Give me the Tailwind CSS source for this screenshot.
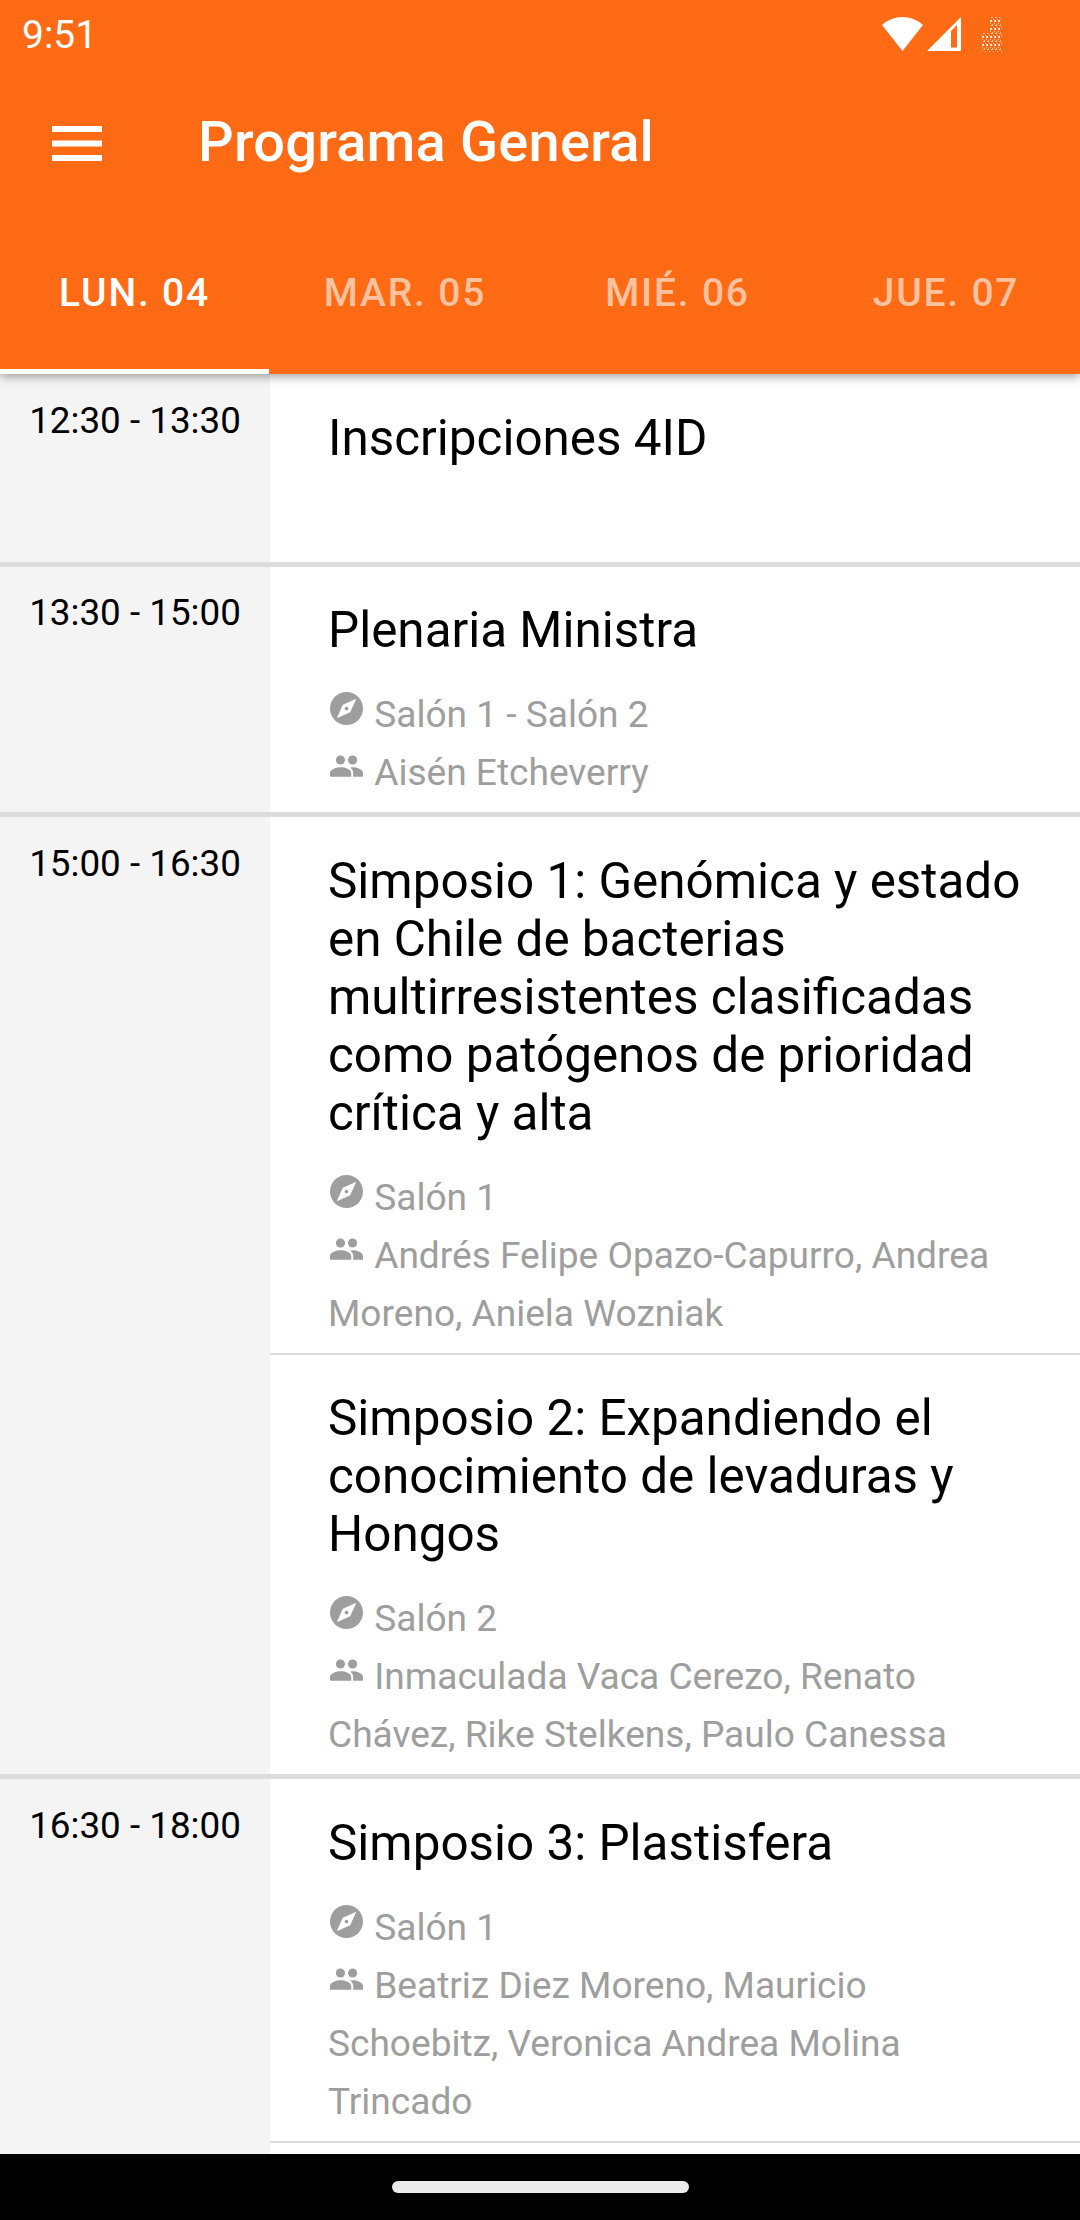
<!DOCTYPE html>
<html lang="es">
<head>
    <meta charset="UTF-8">
    <meta name="viewport" content="width=device-width, initial-scale=1.0">
    <title>Programa General</title>
    <script src="https://cdn.jsdelivr.net/npm/@tailwindcss/browser@4"></script>
</head>
<body class="bg-white font-['Roboto',sans-serif] text-black">
    <!-- icons -->
    <svg class="hidden">
        <symbol id="compass" viewBox="0 0 98 98">
            <path fill-rule="evenodd" fill="currentColor" d="M49 0a49 49 0 1 0 0 98a49 49 0 1 0 0-98zM78 20L60 60L20 78L38 38z"/>
            <circle cx="49" cy="49" r="5.5" fill="currentColor"/>
        </symbol>
        <symbol id="people" viewBox="0 0 98 64">
            <circle cx="31" cy="14" r="13.5" fill="currentColor"/>
            <circle cx="67" cy="14" r="13.5" fill="currentColor"/>
            <path fill="currentColor" d="M0 64V53C0 42 21 36 32 36S63 42 63 53V64zM69 64V53C69 46 66 41 60 36.500Q64 36 67 36C78 36 98 42 98 53V64z"/>
        </symbol>
    </svg>

    <div class="flex h-[2220px] w-[1080px] flex-col overflow-hidden">
        <header class="relative z-10 h-[374px] shrink-0 bg-[#ff6a15] text-white shadow-[0_3px_9px_rgba(0,0,0,0.35)]">
            <div class="flex h-[68px] items-center justify-between pl-[22px] pr-[77px]">
                <span class="text-[39px] leading-[68px] pt-px">9:51</span>
                <div class="flex items-start">
                    <svg class="h-[35px] w-[41px]" viewBox="0 0 41 35" fill="#fff"><path d="M0 8Q9 0 20.500 0T41 8L20.500 34z"/></svg>
                    <svg class="ml-[4px] h-[35px] w-[34px]" viewBox="0 0 34 35"><path fill="#fff" fill-rule="evenodd" d="M34 0V34H0zM30 8L24 14V30.500H30z"/></svg>
                    <svg class="ml-[20px] h-[35px] w-[22px]" viewBox="0 0 22 35">
                        <defs>
                            <pattern id="dots" width="4" height="8" patternUnits="userSpaceOnUse">
                                <path fill="#fff" fill-opacity=".85" d="M1 3h2v2H1z"/>
                                <path fill="#fff" fill-opacity=".6" d="M2 0h2v1H2zM0 2h1v1H0zM1 6h1v1H1zM3 7h1v1H3z"/>
                            </pattern>
                        </defs>
                        <path fill="url(#dots)" d="M9 0H21V35H0V16H9z"/>
                    </svg>
                </div>
            </div>
            <div class="flex h-[150px] items-center pl-[52px]">
                <svg class="h-[35px] w-[50px]" viewBox="0 0 50 35" fill="#fff"><path d="M0 0h50v6H0zM0 14.500h50v6H0zM0 29h50v6H0z"/></svg>
                <h1 class="ml-[96px] pb-[2px] text-[56px] font-medium leading-[66px] tracking-[0.2px]">Programa General</h1>
            </div>
            <nav class="grid h-[156px] grid-cols-4 text-center text-[39px] font-medium leading-[150px] tracking-[1.8px] text-white/60">
                <div class="mr-px border-b-[5px] border-white text-white">LUN. 04</div>
                <div>MAR. 05</div>
                <div class="pl-[5px]">MIÉ. 06</div>
                <div class="pl-[2px]">JUE. 07</div>
            </nav>
        </header>

        <main class="h-[1780px] shrink-0 overflow-hidden">
            <section class="flex h-[193px] border-b-[5px] border-[#dcdcdc]">
                <div class="w-[270px] shrink-0 bg-[#f4f4f4] pt-[25px] text-center text-[36.8px] leading-[43px]">12:30 - 13:30</div>
                <div class="grow px-[58px] pt-[35px]">
                    <h2 class="text-[49.4px] leading-[58px]">Inscripciones 4ID</h2>
                </div>
            </section>

            <section class="flex h-[250px] border-b-[5px] border-[#dcdcdc]">
                <div class="w-[270px] shrink-0 bg-[#f4f4f4] pt-[24px] text-center text-[36.8px] leading-[43px]">13:30 - 15:00</div>
                <div class="grow px-[58px] pt-[34px]">
                    <h2 class="text-[49.4px] leading-[58px]">Plenaria Ministra</h2>
                    <div class="mt-[27px] text-[37.1px] leading-[58px] text-[#9e9e9e]">
                        <p><svg class="ml-[2px] mr-[2px] inline h-[33px] w-[33px] align-[2px]"><use href="#compass"/></svg> Salón 1 - Salón 2</p>
                        <p><svg class="ml-[2px] mr-[2px] inline h-[22px] w-[33px] align-[8px]"><use href="#people"/></svg> Aisén Etcheverry</p>
                    </div>
                </div>
            </section>

            <section class="flex h-[962px] border-b-[5px] border-[#dcdcdc]">
                <div class="w-[270px] shrink-0 bg-[#f4f4f4] pt-[25px] text-center text-[36.8px] leading-[43px]">15:00 - 16:30</div>
                <div class="grow">
                    <div class="h-[538px] border-b-2 border-[#dcdcdc] px-[58px] pt-[35px]">
                        <h2 class="whitespace-nowrap text-[49.4px] leading-[58px]">Simposio 1: Genómica y estado<br>en Chile de bacterias<br>multirresistentes clasificadas<br>como patógenos de prioridad<br>crítica y alta</h2>
                        <div class="mt-[27px] whitespace-nowrap text-[37.1px] leading-[58px] text-[#9e9e9e]">
                            <p><svg class="ml-[2px] mr-[2px] inline h-[33px] w-[33px] align-[2px]"><use href="#compass"/></svg> Salón 1</p>
                            <p><svg class="ml-[2px] mr-[2px] inline h-[22px] w-[33px] align-[8px]"><use href="#people"/></svg> Andrés Felipe Opazo-Capurro, Andrea<br>Moreno, Aniela Wozniak</p>
                        </div>
                    </div>
                    <div class="px-[58px] pt-[34px]">
                        <h2 class="whitespace-nowrap text-[49.4px] leading-[58px]">Simposio 2: Expandiendo el<br>conocimiento de levaduras y<br>Hongos</h2>
                        <div class="mt-[27px] whitespace-nowrap text-[37.1px] leading-[58px] text-[#9e9e9e]">
                            <p><svg class="ml-[2px] mr-[2px] inline h-[33px] w-[33px] align-[2px]"><use href="#compass"/></svg> Salón 2</p>
                            <p><svg class="ml-[2px] mr-[2px] inline h-[22px] w-[33px] align-[8px]"><use href="#people"/></svg> Inmaculada Vaca Cerezo, Renato<br>Chávez, Rike Stelkens, Paulo Canessa</p>
                        </div>
                    </div>
                </div>
            </section>

            <section class="flex h-[400px]">
                <div class="w-[270px] shrink-0 bg-[#f4f4f4] pt-[25px] text-center text-[36.8px] leading-[43px]">16:30 - 18:00</div>
                <div class="grow">
                    <div class="h-[364px] border-b-2 border-[#dcdcdc] px-[58px] pt-[35px]">
                        <h2 class="whitespace-nowrap text-[49.4px] leading-[58px]">Simposio 3: Plastisfera</h2>
                        <div class="mt-[27px] whitespace-nowrap text-[37.1px] leading-[58px] text-[#9e9e9e]">
                            <p><svg class="ml-[2px] mr-[2px] inline h-[33px] w-[33px] align-[2px]"><use href="#compass"/></svg> Salón 1</p>
                            <p><svg class="ml-[2px] mr-[2px] inline h-[22px] w-[33px] align-[8px]"><use href="#people"/></svg> Beatriz Diez Moreno, Mauricio<br>Schoebitz, Veronica Andrea Molina<br>Trincado</p>
                        </div>
                    </div>
                </div>
            </section>
        </main>

        <footer class="flex h-[66px] shrink-0 items-center justify-center bg-black">
            <div class="h-3 w-[297px] rounded-full bg-[#ebebeb]"></div>
        </footer>
    </div>
</body>
</html>
